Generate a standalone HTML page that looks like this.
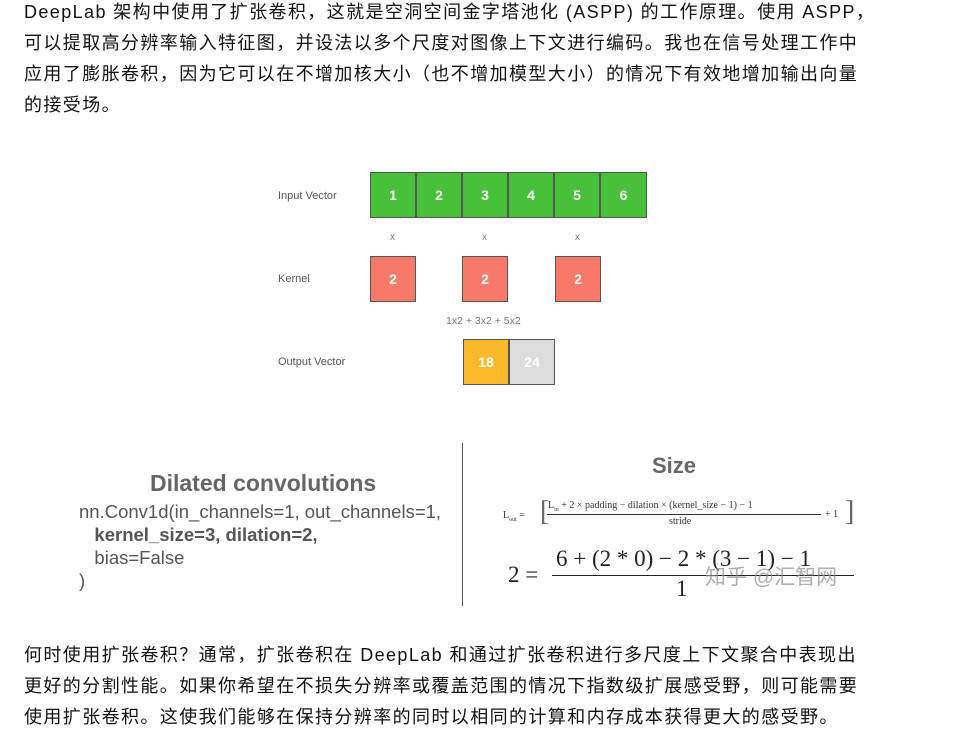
<!DOCTYPE html>
<html><head><meta charset="utf-8"><style>
body{margin:0;background:#fff;width:971px;height:731px;overflow:hidden;position:relative;font-family:"Liberation Sans","Noto Sans CJK SC",sans-serif;color:#121212}
.p{position:absolute;left:24px;font-size:18px;line-height:31px;white-space:nowrap;letter-spacing:1.4px}
.a{position:absolute}
.lbl{position:absolute;font-size:11px;color:#555;font-family:"Liberation Sans",sans-serif}
.b{position:absolute;width:46px;height:46px;box-sizing:border-box;border:1px solid #555;color:#fff;font-weight:bold;font-size:14px;display:flex;align-items:center;justify-content:center;font-family:"Liberation Sans",sans-serif}
.g{background:#47c03a}.r{background:#f6796a}
.x{position:absolute;font-size:10px;color:#777}
</style></head><body>
<div class="p" style="top:-3px">DeepLab 架构中使用了扩张卷积，这就是空洞空间金字塔池化 (ASPP) 的工作原理。使用 ASPP，<br>可以提取高分辨率输入特征图，并设法以多个尺度对图像上下文进行编码。我也在信号处理工作中<br>应用了膨胀卷积，因为它可以在不增加核大小（也不增加模型大小）的情况下有效地增加输出向量<br>的接受场。</div>

<div class="lbl" style="left:278px;top:190px">Input Vector</div>
<div class="lbl" style="left:278px;top:273px">Kernel</div>
<div class="lbl" style="left:278px;top:356px">Output Vector</div>
<div class="b g" style="left:370px;top:172px">1</div>
<div class="b g" style="left:416px;top:172px">2</div>
<div class="b g" style="left:462px;top:172px">3</div>
<div class="b g" style="left:508px;top:172px">4</div>
<div class="b g" style="left:554px;top:172px">5</div>
<div class="b g" style="left:600px;top:172px;width:47px">6</div>
<div class="x" style="left:390px;top:232px">x</div>
<div class="x" style="left:482px;top:232px">x</div>
<div class="x" style="left:575px;top:232px">x</div>
<div class="b r" style="left:370px;top:256px">2</div>
<div class="b r" style="left:462px;top:256px">2</div>
<div class="b r" style="left:555px;top:256px">2</div>
<div class="x" style="left:446px;top:315px;font-size:10.5px">1x2 + 3x2 + 5x2</div>
<div class="b" style="left:463px;top:339px;background:#fbb829">18</div>
<div class="b" style="left:509px;top:339px;background:#dcdcdc">24</div>

<div class="a" style="left:462px;top:443px;width:1px;height:163px;background:#555"></div>
<div class="a" style="left:150px;top:470px;font-size:23px;font-weight:bold;color:#666">Dilated convolutions</div>
<div class="a" style="left:79px;top:500px;font-size:18.5px;color:#555;line-height:23px;white-space:nowrap">nn.Conv1d(in_channels=1, out_channels=1,<br>&nbsp;&nbsp;&nbsp;<b>kernel_size=3, dilation=2,</b><br>&nbsp;&nbsp;&nbsp;bias=False<br>)</div>
<div class="a" style="left:652px;top:453px;font-size:22px;font-weight:bold;color:#666">Size</div>
<div class="a" style="left:503px;top:500px;font-family:'Liberation Serif',serif;font-size:10px;color:#333;white-space:nowrap">
<span style="position:absolute;top:10px;left:0">L<sub style="font-size:6px">out</sub> =</span>
<span style="position:absolute;left:37px;top:-4px;font-size:28px;color:#666;font-weight:100">[</span>
<span style="position:absolute;left:45px;top:0">L<sub style="font-size:6px">in</sub> + 2 × padding − dilation × (kernel_size − 1) − 1</span>
<div style="position:absolute;left:44px;top:14px;width:274px;height:1px;background:#333"></div>
<span style="position:absolute;left:166px;top:16px">stride</span>
<span style="position:absolute;left:322px;top:9px">+ 1</span>
<span style="position:absolute;left:342px;top:-4px;font-size:28px;color:#666">]</span>
</div>
<div class="a" style="left:508px;top:548px;font-family:'Liberation Serif',serif;font-size:23px;color:#222;white-space:nowrap">
<span style="position:absolute;top:14px;left:0">2 =</span>
<span style="position:absolute;left:48px;top:-2px">6 + (2 * 0) − 2 * (3 − 1) − 1</span>
<div style="position:absolute;left:44px;top:27px;width:302px;height:1px;background:#222"></div>
<span style="position:absolute;left:168px;top:28px">1</span>
</div>
<div class="a" style="left:705px;top:561px;font-size:21px;color:rgba(140,140,140,.7);white-space:nowrap">知乎 @汇智网</div>

<div class="p" style="top:640px">何时使用扩张卷积？通常，扩张卷积在 DeepLab 和通过扩张卷积进行多尺度上下文聚合中表现出<br>更好的分割性能。如果你希望在不损失分辨率或覆盖范围的情况下指数级扩展感受野，则可能需要<br>使用扩张卷积。这使我们能够在保持分辨率的同时以相同的计算和内存成本获得更大的感受野。</div>
</body></html>
